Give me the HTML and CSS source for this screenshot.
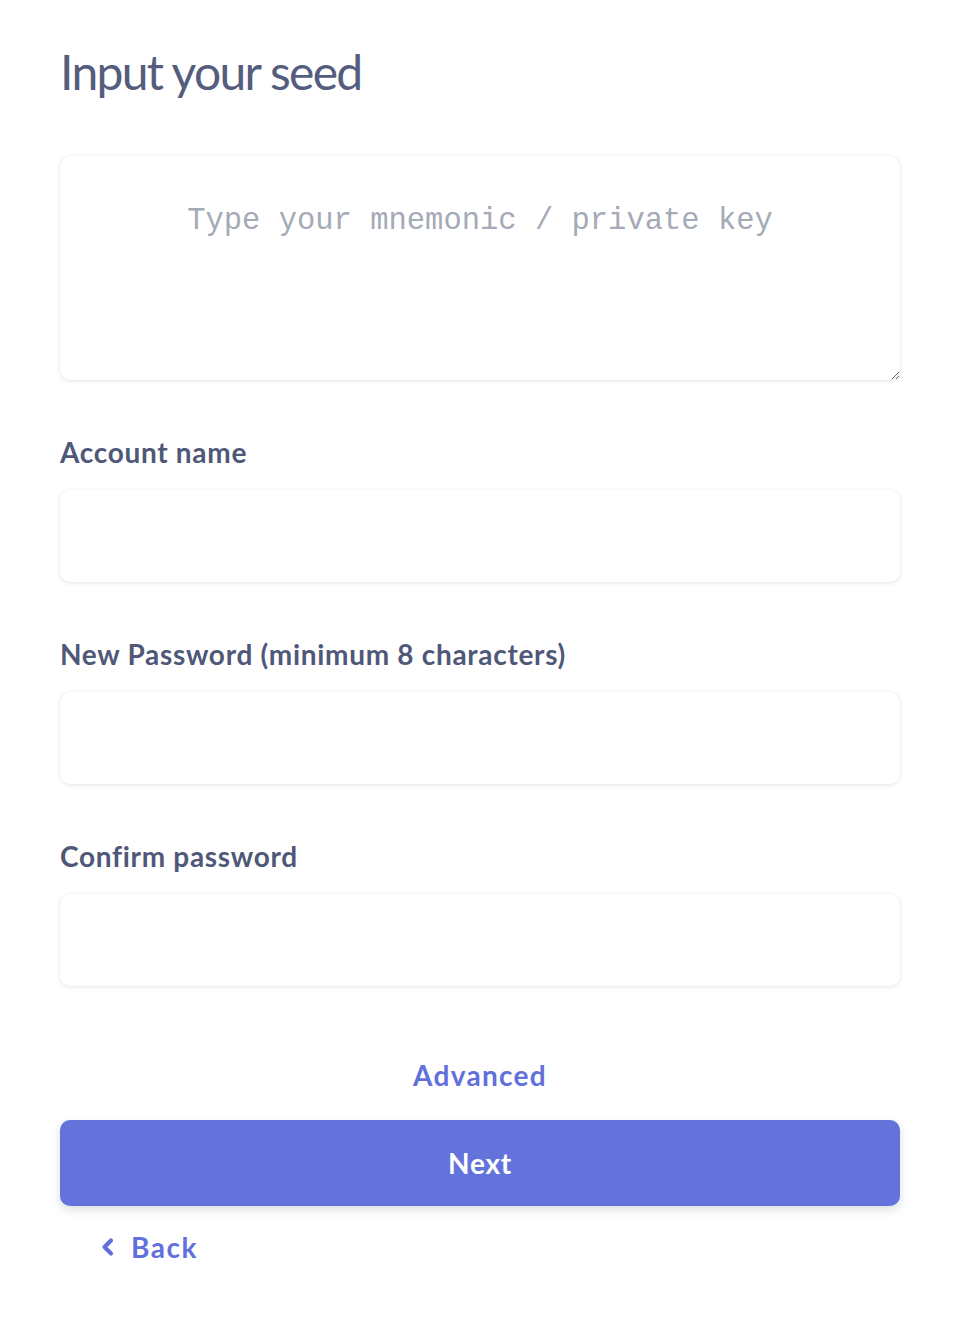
FILE: index.html
```html
<!DOCTYPE html>
<html lang="en">
<head>
<meta charset="utf-8">
<title>Input your seed</title>
<link rel="stylesheet" href="styles.css">
</head>
<body>
<main class="page">
  <h1 class="title">Input your seed</h1>
  <textarea class="seed" placeholder="Type your mnemonic / private key"></textarea>
  <div class="field">
    <label class="label" for="acc">Account name</label>
    <input class="input" id="acc" type="text">
  </div>
  <div class="field">
    <label class="label" for="pw">New Password (minimum 8 characters)</label>
    <input class="input" id="pw" type="password">
  </div>
  <div class="field">
    <label class="label" for="pw2">Confirm password</label>
    <input class="input" id="pw2" type="password">
  </div>
  <a class="advanced" href="#">Advanced</a>
  <button class="next" type="button">Next</button>
  <a class="back" href="#">
    <svg class="chev" width="16" height="20" viewBox="0 0 16 20"><path d="M11 3.5 L4.5 10 L11 16.5" fill="none" stroke="currentColor" stroke-width="4.2" stroke-linecap="round" stroke-linejoin="round"/></svg>
    <span>Back</span>
  </a>
</main>
</body>
</html>
```

FILE: styles.css
```css
* { box-sizing: border-box; }
html, body { margin: 0; padding: 0; background: #fff; }
body { font-family: "Lato", "Noto Sans", sans-serif; color: #535c7a; }
.page {
  width: 840px;
  margin: 0 60px;
  padding-top: 44px;
  display: flex;
  flex-direction: column;
}
.title {
  margin: 0;
  font-size: 48px;
  font-weight: 400;
  letter-spacing: -1.7px;
  line-height: 56px;
  color: #545d7c;
}
.seed {
  margin-top: 56px;
  width: 840px;
  height: 224px;
  border: none;
  border-radius: 10px;
  box-shadow: 0 1px 4px rgba(40, 50, 80, 0.12), 0 0 1px rgba(40, 50, 80, 0.08);
  padding: 47px 20px 20px;
  font-family: "Liberation Mono", "Courier New", monospace;
  font-size: 30.5px;
  line-height: 36px;
  text-align: center;
  color: #333;
  outline: none;
  resize: vertical;
}
.seed::placeholder { color: #a4aab6; }
.field {
  display: flex;
  flex-direction: column;
  margin-top: 56px;
}
.field + .field { margin-top: 56px; }
.label {
  font-size: 28px;
  font-weight: 700;
  letter-spacing: 0.7px;
  line-height: 32px;
  color: #4f5878;
}
.input {
  margin-top: 22px;
  height: 92px;
  border: none;
  border-radius: 10px;
  box-shadow: 0 1px 4px rgba(40, 50, 80, 0.12), 0 0 1px rgba(40, 50, 80, 0.08);
  font-size: 26px;
  padding: 0 20px;
  outline: none;
}
.advanced {
  align-self: center;
  margin-top: 72px;
  font-size: 28px;
  font-weight: 700;
  letter-spacing: 1.3px;
  line-height: 34px;
  color: #6270dc;
  text-decoration: none;
}
.next {
  margin-top: 28px;
  height: 86px;
  border: none;
  border-radius: 10px;
  background: #6373db;
  color: #fff;
  font-family: inherit;
  font-size: 28px;
  font-weight: 700;
  letter-spacing: 0.8px;
  box-shadow: 0 4px 10px rgba(40, 50, 80, 0.16);
}
.back {
  align-self: flex-start;
  margin-top: 24px;
  margin-left: 40px;
  display: flex;
  align-items: center;
  gap: 15px;
  font-size: 28px;
  font-weight: 700;
  letter-spacing: 1.5px;
  line-height: 34px;
  color: #6270dc;
  text-decoration: none;
}
.chev { display: block; }
```
